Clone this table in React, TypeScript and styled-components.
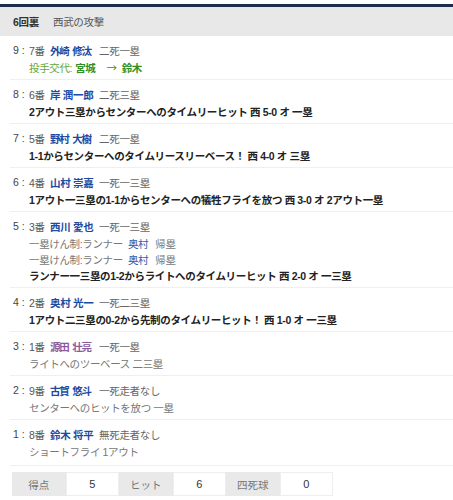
import React from "react";
import styled, { createGlobalStyle } from "styled-components";

const GlobalStyle = createGlobalStyle`
  html, body { margin: 0; padding: 0; background: #ffffff; }
  body {
    font-family: "Liberation Sans", "Noto Sans CJK JP", sans-serif;
    font-size: 10px;
    color: #333;
  }
`;

const Page = styled.div`
  padding-top: 4px;
  width: 453px;
`;

const Panel = styled.section`
  border-top: 3px solid #1f2b4d;
  box-shadow: inset 0 1px 0 #6f7d99;
`;

const Header = styled.header`
  display: flex;
  align-items: center;
  gap: 14px;
  height: 29px;
  padding-left: 13px;
  background: #e8e8e8;
  font-size: 10.5px;
  letter-spacing: -0.3px;
`;

const Inning = styled.span`
  font-weight: bold;
  color: #333;
`;

const Side = styled.span`
  color: #555;
`;

const List = styled.ul`
  list-style: none;
  margin: 0;
  padding: 0;
`;

const Row = styled.li<{ $extra?: number }>`
  margin-left: 10px;
  padding: 4px 0 ${(p) => 3 + (p.$extra ?? 0)}px 3px;
  border-bottom: 1px solid #efefef;
`;

const Head = styled.div`
  display: flex;
  align-items: center;
  height: 20px;
  color: #555;
  font-size: 10.5px;
  letter-spacing: -0.3px;
`;

const Num = styled.span`
  width: 16px;
  color: #444;
  letter-spacing: 0;
`;

const Order = styled.span`
  width: 21px;
  color: #555;
`;

const Name = styled.span<{ $tone?: "blue" | "purple"; $narrow?: boolean }>`
  width: 49px;
  white-space: nowrap;
  font-weight: bold;
  color: ${(p) => (p.$tone === "purple" ? "#8b5b9c" : "#1d4aa0")};
  letter-spacing: ${(p) => (p.$narrow ? "-1.2px" : "-0.3px")};
  word-spacing: ${(p) => (p.$narrow ? "2px" : "0")};
`;

const Status = styled.span`
  color: #666;
`;

const Line = styled.div<{ $kind: "bold" | "plain" | "change" | "runner" }>`
  padding-left: 16px;
  height: 16px;
  line-height: 16px;
  white-space: nowrap;
  font-size: 10.5px;
  letter-spacing: -0.35px;
  font-weight: ${(p) => (p.$kind === "bold" ? "bold" : "normal")};
  color: ${(p) =>
    p.$kind === "bold"
      ? "#222"
      : p.$kind === "change"
      ? "#63a83a"
      : "#777"};
`;

const Green = styled.b`
  color: #2f8f24;
  margin-left: 3px;
`;

const Arrow = styled.span`
  font-family: "Noto Sans CJK JP", sans-serif;
  color: #2f8f24;
  margin: 0 2px 0 11px;
`;

const RunnerName = styled.span`
  color: #2c58a8;
  margin: 0 7px 0 5px;
`;

const Stats = styled.div`
  display: flex;
  margin: 6px 0 0 12px;
`;

const Cell = styled.div<{ $label?: boolean }>`
  display: flex;
  align-items: center;
  justify-content: center;
  box-sizing: border-box;
  width: 53.5px;
  height: 24px;
  background: ${(p) => (p.$label ? "#e9e9e9" : "#ffffff")};
  color: ${(p) => (p.$label ? "#777" : "#333")};
  border: 1px solid ${(p) => (p.$label ? "#e9e9e9" : "#eeeeee")};
  font-size: ${(p) => (p.$label ? "10.5px" : "11px")};
`;

type LineData =
  | { kind: "bold" | "plain"; text: string }
  | { kind: "change"; from: string; to: string }
  | { kind: "runner"; name: string };

type Play = {
  n: number;
  order: string;
  name: string;
  tone?: "blue" | "purple";
  narrow?: boolean;
  status: string;
  lines: LineData[];
  extra?: number;
};

const plays: Play[] = [
  {
    n: 9,
    order: "7番",
    name: "外崎 修汰",
    narrow: true,
    status: "二死一塁",
    lines: [{ kind: "change", from: "宮城", to: "鈴木" }],
  },
  {
    n: 8,
    order: "6番",
    name: "岸 潤一郎",
    status: "二死三塁",
    lines: [{ kind: "bold", text: "2アウト三塁からセンターへのタイムリーヒット 西 5-0 オ 一塁" }],
  },
  {
    n: 7,
    order: "5番",
    name: "野村 大樹",
    narrow: true,
    status: "二死一塁",
    lines: [{ kind: "bold", text: "1-1からセンターへのタイムリースリーベース！ 西 4-0 オ 三塁" }],
  },
  {
    n: 6,
    order: "4番",
    name: "山村 崇嘉",
    status: "一死一三塁",
    lines: [
      {
        kind: "bold",
        text: "1アウト一三塁の1-1からセンターへの犠牲フライを放つ 西 3-0 オ 2アウト一塁",
      },
    ],
  },
  {
    n: 5,
    order: "3番",
    name: "西川 愛也",
    status: "一死一三塁",
    lines: [
      { kind: "runner", name: "奥村" },
      { kind: "runner", name: "奥村" },
      { kind: "bold", text: "ランナー一三塁の1-2からライトへのタイムリーヒット 西 2-0 オ 一三塁" },
    ],
  },
  {
    n: 4,
    order: "2番",
    name: "奥村 光一",
    status: "一死二三塁",
    lines: [{ kind: "bold", text: "1アウト二三塁の0-2から先制のタイムリーヒット！ 西 1-0 オ 一三塁" }],
  },
  {
    n: 3,
    order: "1番",
    name: "源田 壮亮",
    tone: "purple",
    narrow: true,
    status: "一死一塁",
    lines: [{ kind: "plain", text: "ライトへのツーベース 二三塁" }],
  },
  {
    n: 2,
    order: "9番",
    name: "古賀 悠斗",
    narrow: true,
    status: "一死走者なし",
    lines: [{ kind: "plain", text: "センターへのヒットを放つ 一塁" }],
  },
  {
    n: 1,
    order: "8番",
    name: "鈴木 将平",
    status: "無死走者なし",
    lines: [{ kind: "plain", text: "ショートフライ 1アウト" }],
    extra: 2,
  },
];

const stats = [
  { label: "得点", value: "5" },
  { label: "ヒット", value: "6" },
  { label: "四死球", value: "0" },
];

function renderLine(line: LineData, i: number) {
  if (line.kind === "change") {
    return (
      <Line key={i} $kind="change">
        投手交代:
        <Green>{line.from}</Green>
        <Arrow>→</Arrow>
        <Green>{line.to}</Green>
      </Line>
    );
  }
  if (line.kind === "runner") {
    return (
      <Line key={i} $kind="runner">
        一塁けん制:ランナー
        <RunnerName>{line.name}</RunnerName>
        帰塁
      </Line>
    );
  }
  return (
    <Line key={i} $kind={line.kind}>
      {line.text}
    </Line>
  );
}

export default function App() {
  return (
    <Page>
      <GlobalStyle />
      <Panel>
        <Header>
          <Inning>6回裏</Inning>
          <Side>西武の攻撃</Side>
        </Header>
        <List>
          {plays.map((p) => (
            <Row key={p.n} $extra={p.extra}>
              <Head>
                <Num>{p.n} :</Num>
                <Order>{p.order}</Order>
                <Name $tone={p.tone} $narrow={p.narrow}>
                  {p.name}
                </Name>
                <Status>{p.status}</Status>
              </Head>
              {p.lines.map(renderLine)}
            </Row>
          ))}
        </List>
        <Stats>
          {stats.map((s) => (
            <React.Fragment key={s.label}>
              <Cell $label>{s.label}</Cell>
              <Cell>{s.value}</Cell>
            </React.Fragment>
          ))}
        </Stats>
      </Panel>
    </Page>
  );
}
